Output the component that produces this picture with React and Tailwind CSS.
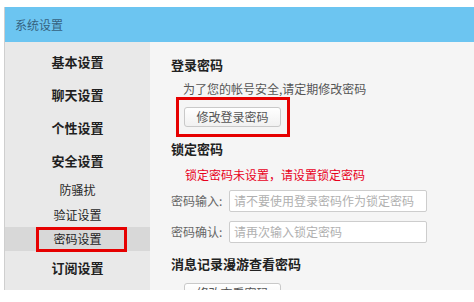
import React from 'react';

const menu = [
  { label: '基本设置', h: 'h-[33px]', bold: true },
  { label: '聊天设置', h: 'h-[33px]', bold: true },
  { label: '个性设置', h: 'h-[33px]', bold: true },
  { label: '安全设置', h: 'h-[33px]', bold: true },
  { label: '防骚扰', h: 'h-[26px]' },
  { label: '验证设置', h: 'h-[24px]' },
  { label: '密码设置', h: 'h-[24px]', active: true },
  { label: '订阅设置', h: 'h-[33px]', bold: true },
];

export default function App() {
  return (
    <div className="w-[474px] h-[302px] bg-white pt-[7px] pl-[4px] overflow-hidden" style={{ fontFamily: '"Noto Sans CJK SC", "Noto Sans", sans-serif' }}>
      <div className="h-[283px] flex flex-col border-l border-[#cfcfcf] overflow-hidden">
        {/* title bar */}
        <div className="h-[35px] shrink-0 bg-[#6cc5f1] flex items-center pl-[10px] text-[12px] text-[#35627f]">
          系统设置
        </div>

        <div className="flex flex-1 min-h-0">
          {/* sidebar */}
          <div className="w-[145px] shrink-0 bg-[#e9e9e9] pt-[3px]">
            {menu.map((m) => (
              <div
                key={m.label}
                className={`${m.h} relative flex items-center justify-center text-[#1f1f1f] ${m.bold ? 'text-[13px] font-bold' : 'text-[12px]'} ${m.active ? 'bg-[#d8d8d8]' : ''}`}
              >
                {m.label}
                {m.active && (
                  <span className="absolute left-[31px] top-0 w-[91px] h-[25px] border-[3px] border-[#e60000]" />
                )}
              </div>
            ))}
          </div>

          {/* content */}
          <div className="flex-1 bg-[#f5f5f5] pl-[21px] pt-[15px] text-[12px]">
            <div className="h-[16px] leading-[16px] text-[13px] font-bold text-[#222]">登录密码</div>
            <div className="mt-[8px] h-[16px] leading-[16px] pl-[12px] text-[#555]">为了您的帐号安全,请定期修改密码</div>
            <div className="ml-[5px] w-[114px] h-[40px] border-[3px] border-[#e60000] pl-[5px] pt-[7px]">
              <button className="w-[97px] h-[20px] rounded-[3px] border border-[#c9c9c9] bg-gradient-to-b from-white to-[#f1f1f1] text-[12px] text-[#555] leading-[18px]">
                修改登录密码
              </button>
            </div>

            <div className="mt-[4px] h-[16px] leading-[16px] text-[13px] font-bold text-[#222]">锁定密码</div>
            <div className="mt-[10px] h-[16px] leading-[16px] pl-[14px] text-[#e8001c]">锁定密码未设置，请设置锁定密码</div>

            <div className="mt-[7px] flex items-center h-[22px]">
              <span className="w-[58px] text-[#666]">密码输入:</span>
              <div className="w-[198px] h-[22px] bg-white border border-[#cdcdcd] rounded-[2px] pl-[4px] flex items-center text-[#b0b0b0]">
                请不要使用登录密码作为锁定密码
              </div>
            </div>
            <div className="mt-[9px] flex items-center h-[22px]">
              <span className="w-[58px] text-[#666]">密码确认:</span>
              <div className="w-[198px] h-[22px] bg-white border border-[#cdcdcd] rounded-[2px] pl-[4px] flex items-center text-[#b0b0b0]">
                请再次输入锁定密码
              </div>
            </div>

            <div className="mt-[13px] h-[16px] leading-[16px] text-[13px] font-bold text-[#222]">消息记录漫游查看密码</div>
            <button className="mt-[11px] ml-[13px] w-[97px] h-[20px] rounded-[3px] border border-[#c9c9c9] bg-gradient-to-b from-white to-[#f1f1f1] text-[12px] text-[#555] leading-[18px]">
              修改查看密码
            </button>
          </div>
        </div>
      </div>
    </div>
  );
}
